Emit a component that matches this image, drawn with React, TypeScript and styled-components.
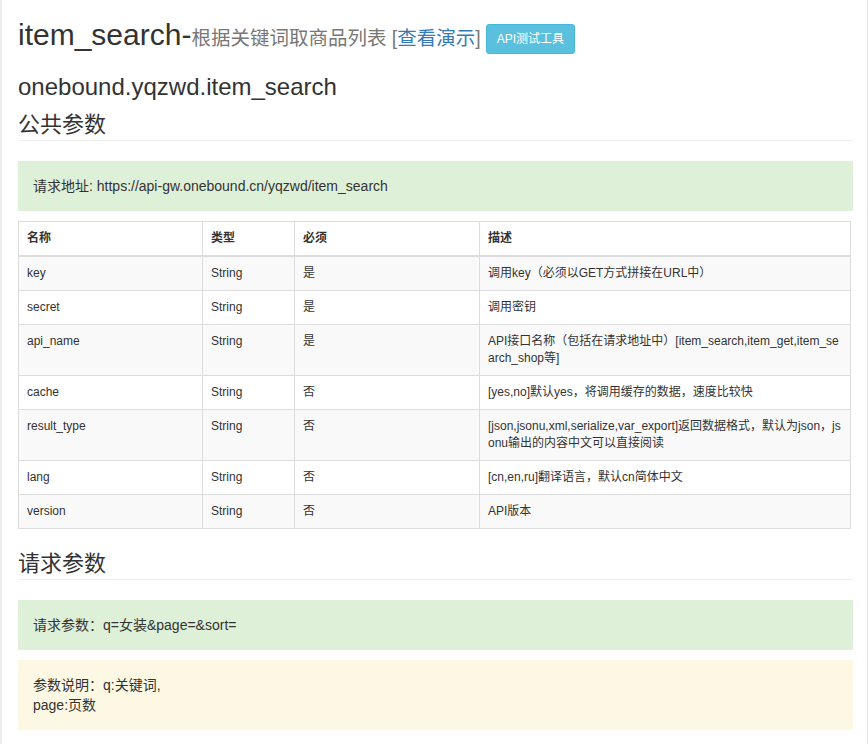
import React from "react";
import styled, { createGlobalStyle } from "styled-components";

const GlobalStyle = createGlobalStyle`
  html, body { margin: 0; padding: 0; background: #fff; }
  body {
    font-family: "Liberation Sans", Arial, "Noto Sans CJK SC", sans-serif;
    color: #333;
    font-size: 14px;
  }
  * { box-sizing: border-box; }
`;

const Page = styled.div`
  width: 868px;
  min-height: 744px;
  border-left: 2px solid #eeeeee;
  border-right: 1px solid #e4e4e4;
  padding: 17px 14px 20px 16px;
`;

const TitleRow = styled.div`
  display: flex;
  align-items: flex-start;
  height: 37px;
`;

const Title = styled.h1`
  margin: 0;
  font-size: 30px;
  line-height: 36px;
  font-weight: 400;
  color: #333;
`;

const Sub = styled.small`
  font-size: 19.5px;
  color: #777;
`;

const Link = styled.a`
  color: #337ab7;
  text-decoration: none;
`;

const TestButton = styled.button`
  align-self: flex-end;
  margin-left: 5px;
  font-family: inherit;
  font-size: 12px;
  line-height: 18px;
  padding: 5px 10px;
  color: #fff;
  background: #5bc0de;
  border: 1px solid #46b8da;
  border-radius: 3px;
  cursor: pointer;
`;

const ApiName = styled.h3`
  margin: 20px 0 0;
  font-size: 24px;
  line-height: 26px;
  font-weight: 400;
`;

const SectionHeader = styled.h3<{ $gap: number }>`
  margin: ${(p) => p.$gap}px 0 0;
  font-size: 22px;
  line-height: 26px;
  font-weight: 400;
  padding-bottom: 2px;
  border-bottom: 1px solid #eee;
`;

const Alert = styled.div<{ $tone: "success" | "warning"; $gap: number }>`
  margin-top: ${(p) => p.$gap}px;
  padding: 15px;
  font-size: 14px;
  line-height: 20px;
  color: #333;
  background: ${(p) => (p.$tone === "success" ? "#dff0d8" : "#fcf8e3")};
`;

const Table = styled.table`
  margin-top: 10px;
  width: 832px;
  border-collapse: collapse;
  table-layout: fixed;
  border: 1px solid #ddd;
  font-size: 12px;
  line-height: 17px;
`;

const Th = styled.th`
  text-align: left;
  font-weight: bold;
  padding: 8px;
  border: 1px solid #ddd;
  border-bottom: 2px solid #ddd;
  vertical-align: bottom;
`;

const Tr = styled.tr<{ $striped: boolean }>`
  background: ${(p) => (p.$striped ? "#f9f9f9" : "#fff")};
`;

const Td = styled.td`
  padding: 8px;
  border: 1px solid #ddd;
  vertical-align: top;
  word-break: break-all;
`;

const rows: [string, string, string, string][] = [
  ["key", "String", "是", "调用key（必须以GET方式拼接在URL中）"],
  ["secret", "String", "是", "调用密钥"],
  ["api_name", "String", "是", "API接口名称（包括在请求地址中）[item_search,item_get,item_search_shop等]"],
  ["cache", "String", "否", "[yes,no]默认yes，将调用缓存的数据，速度比较快"],
  ["result_type", "String", "否", "[json,jsonu,xml,serialize,var_export]返回数据格式，默认为json，jsonu输出的内容中文可以直接阅读"],
  ["lang", "String", "否", "[cn,en,ru]翻译语言，默认cn简体中文"],
  ["version", "String", "否", "API版本"],
];

export default function App() {
  return (
    <>
      <GlobalStyle />
      <Page>
        <TitleRow>
          <Title>
            item_search-
            <Sub>
              根据关键词取商品列表 [<Link href="#">查看演示</Link>]
            </Sub>
          </Title>
          <TestButton>API测试工具</TestButton>
        </TitleRow>
        <ApiName>onebound.yqzwd.item_search</ApiName>
        <SectionHeader $gap={12}>公共参数</SectionHeader>
        <Alert $tone="success" $gap={20}>
          请求地址: https://api-gw.onebound.cn/yqzwd/item_search
        </Alert>
        <Table>
          <colgroup>
            <col style={{ width: 184 }} />
            <col style={{ width: 92 }} />
            <col style={{ width: 185 }} />
            <col style={{ width: 371 }} />
          </colgroup>
          <thead>
            <tr>
              <Th>名称</Th>
              <Th>类型</Th>
              <Th>必须</Th>
              <Th>描述</Th>
            </tr>
          </thead>
          <tbody>
            {rows.map((r, i) => (
              <Tr key={r[0]} $striped={i % 2 === 0}>
                <Td>{r[0]}</Td>
                <Td>{r[1]}</Td>
                <Td>{r[2]}</Td>
                <Td>{r[3]}</Td>
              </Tr>
            ))}
          </tbody>
        </Table>
        <SectionHeader $gap={22}>请求参数</SectionHeader>
        <Alert $tone="success" $gap={20}>
          请求参数：q=女装&amp;page=&amp;sort=
        </Alert>
        <Alert $tone="warning" $gap={10}>
          参数说明：q:关键词,
          <br />
          page:页数
        </Alert>
      </Page>
    </>
  );
}
